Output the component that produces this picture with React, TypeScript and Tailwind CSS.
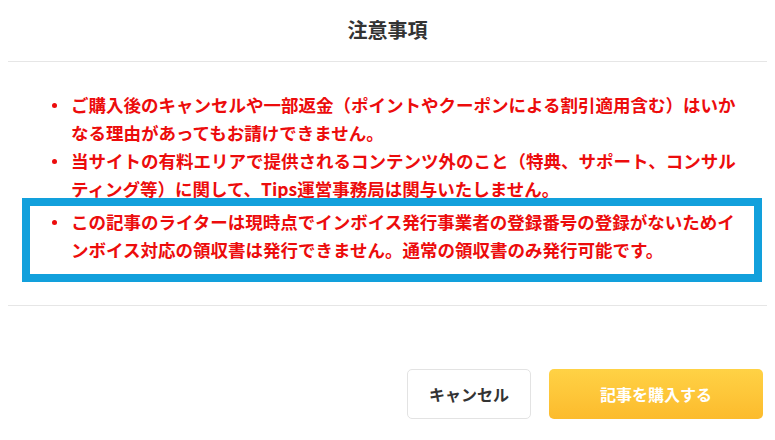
const items = [
  "ご購入後のキャンセルや一部返金（ポイントやクーポンによる割引適用含む）はいかなる理由があってもお請けできません。",
  "当サイトの有料エリアで提供されるコンテンツ外のこと（特典、サポート、コンサルティング等）に関して、Tips運営事務局は関与いたしません。",
];

const invoice =
  "この記事のライターは現時点でインボイス発行事業者の登録番号の登録がないためインボイス対応の領収書は発行できません。通常の領収書のみ発行可能です。";

function Bullet({ children, className = "" }: { children: string; className?: string }) {
  return (
    <li className={`relative w-[672px] ${className}`}>
      <span className="absolute left-[-19px] top-[12px] h-[5px] w-[5px] rounded-full bg-[#ec0c0c]" />
      {children}
    </li>
  );
}

export default function App() {
  return (
    <div className="relative h-[440px] w-[775px] overflow-hidden bg-white font-['Noto_Sans_CJK_JP',sans-serif]">
      <div className="flex h-[61px] items-center justify-center pb-[1px] text-[20px] font-bold text-[#333]">
        注意事項
      </div>
      <div className="mx-2 h-px bg-[#e6e6e6]" />

      <ul className="pb-[41px] pl-[71px] pt-[29px] text-[17.5px] font-bold leading-[28px] text-[#ec0c0c]">
        {items.map((t) => (
          <Bullet key={t}>{t}</Bullet>
        ))}
        <Bullet className="mt-[5px]">{invoice}</Bullet>
      </ul>
      <div className="mx-2 h-px bg-[#e6e6e6]" />

      <div className="flex justify-end gap-[18px] pr-[12px] pt-[63px]">
        <button className="h-[50px] w-[124px] rounded-[5px] border border-[#e3e3e3] bg-white text-[16px] font-bold text-[#333]">
          キャンセル
        </button>
        <button className="h-[50px] w-[214px] rounded-[5px] bg-gradient-to-b from-[#ffd245] to-[#fcbb2c] text-[16px] font-bold text-white">
          記事を購入する
        </button>
      </div>

      {/* annotation frame */}
      <div className="pointer-events-none absolute left-[22px] top-[198px] h-[84px] w-[740px] border-[8px] border-[#12a0dc]" />
    </div>
  );
}
